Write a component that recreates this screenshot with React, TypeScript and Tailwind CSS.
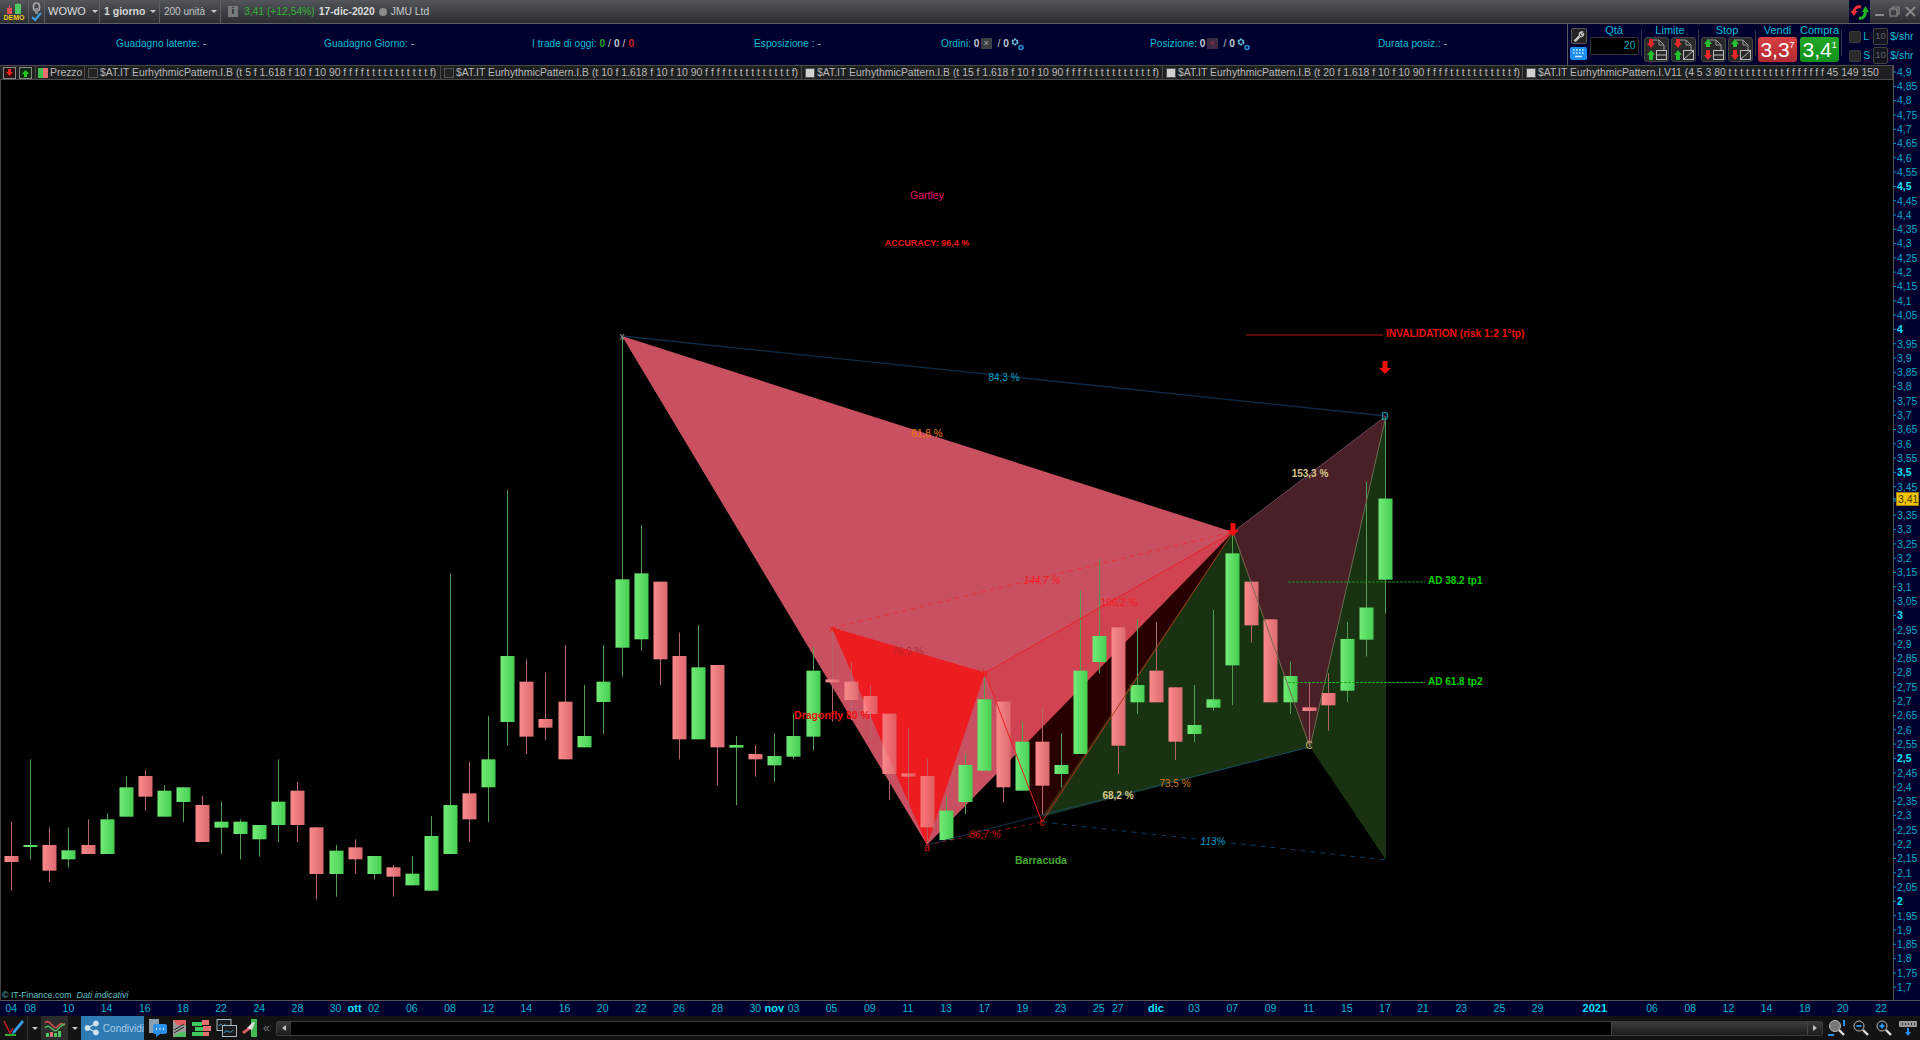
import React from "react";

type C = [number, number, number, number, "g" | "r"];
const z7 = (c: C): C => [480 + c[0] / 3, 480 + c[1] / 3, 480 + c[2] / 3, 480 + c[3] / 3, c[4]];
const z6 = (c: C): C => [520 + c[0] / 3, 520 + c[1] / 3, 520 + c[2] / 3, 520 + c[3] / 3, c[4]];
const z8 = (c: C): C => [320 + c[0] / 2.8, 320 + c[1] / 2.8, 320 + c[2] / 2.8, 320 + c[3] / 2.8, c[4]];

const candles: C[] = [
  ...([
    [1025, 1128, 1146, 1232, "r"], [838, 1095, 1097, 1138, "g"], [1042, 1095, 1172, 1206, "r"], [1042, 1111, 1138, 1162, "g"],
    [1018, 1095, 1122, 1122, "r"], [1000, 1018, 1122, 1122, "g"], [888, 922, 1010, 1010, "g"], [870, 888, 950, 992, "r"],
    [915, 932, 1010, 1010, "g"], [922, 922, 966, 1026, "g"], [948, 975, 1086, 1086, "r"], [965, 1025, 1043, 1122, "g"],
    [1018, 1025, 1062, 1138, "g"], [1035, 1035, 1078, 1130, "g"], [838, 965, 1035, 1086, "g"], [905, 932, 1035, 1086, "r"],
    [1042, 1042, 1182, 1258, "r"], [1095, 1112, 1182, 1250, "g"], [1078, 1102, 1138, 1182, "r"], [1128, 1128, 1182, 1198, "g"],
    [1155, 1162, 1190, 1250, "r"], [1128, 1181, 1216, 1216, "g"], [1008, 1068, 1232, 1232, "g"], [280, 975, 1122, 1122, "g"],
    [845, 940, 1018, 1086, "r"], [708, 838, 922, 1026, "g"], [30, 528, 726, 796, "g"], [538, 605, 770, 822, "r"],
    [578, 717, 743, 780, "r"], [495, 665, 838, 838, "r"], [615, 768, 802, 802, "g"], [495, 605, 666, 762, "g"],
    [-432, 298, 503, 590, "g"], [135, 280, 478, 512, "g"], [305, 305, 538, 615, "r"], [458, 528, 778, 838, "r"],
    [435, 562, 778, 778, "g"], [555, 555, 802, 916, "r"], [768, 795, 803, 976, "g"], [795, 822, 838, 890, "r"],
    [760, 828, 856, 906, "g"],
  ] as C[]).map(z7),
  ...([
    [580, 648, 710, 718, "g"], [380, 452, 650, 692, "g"], [325, 478, 487, 605, "r"], [425, 485, 540, 600, "r"],
    [495, 528, 582, 660, "r"], [580, 581, 762, 840, "r"], [622, 760, 770, 855, "r"], [717, 768, 922, 975, "r"],
    [828, 872, 960, 960, "g"], [700, 735, 846, 882, "g"], [470, 538, 752, 752, "g"], [545, 545, 802, 847, "r"],
    [605, 665, 812, 812, "g"], [562, 665, 797, 885, "r"], [640, 735, 762, 803, "g"], [212, 452, 702, 702, "g"],
    [118, 348, 426, 460, "g"], [322, 322, 677, 762, "r"], [297, 495, 547, 582, "g"], [305, 452, 547, 547, "r"],
    [502, 502, 665, 720, "r"], [495, 615, 642, 666, "g"], [270, 538, 563, 572, "g"], [40, 100, 436, 556, "g"],
    [185, 185, 316, 368, "r"], [298, 298, 547, 547, "r"], [425, 468, 547, 582, "g"], [485, 562, 573, 680, "r"],
    [460, 519, 556, 632, "r"],
  ] as C[]).map(z6),
  ...([
    [845, 893, 1038, 1070, "g"], [452, 805, 895, 942, "g"], [270, 500, 727, 822, "g"],
  ] as C[]).map(z8),
];

const cx = (i: number) => 11.2 + 19.08 * i;

const dates: [string, number, boolean?][] = [
  ["04", 0], ["08", 1], ["10", 3], ["14", 5], ["16", 7], ["18", 9], ["22", 11], ["24", 13], ["28", 15], ["30", 17], ["ott", 18, true],
  ["02", 19], ["06", 21], ["08", 23], ["12", 25], ["14", 27], ["16", 29], ["20", 31], ["22", 33], ["26", 35], ["28", 37], ["30", 39],
  ["nov", 40, true], ["03", 41], ["05", 43], ["09", 45], ["11", 47], ["13", 49], ["17", 51], ["19", 53], ["23", 55], ["25", 57], ["27", 58],
  ["dic", 60, true], ["03", 62], ["07", 64], ["09", 66], ["11", 68], ["15", 70], ["17", 72], ["21", 74], ["23", 76], ["25", 78], ["29", 80],
  ["2021", 83, true], ["06", 86], ["08", 88], ["12", 90], ["14", 92], ["18", 94], ["20", 96], ["22", 98],
];

const prices = Array.from({ length: 65 }, (_, i) => 490 - i * 5);

function Lbl({ x, y, c, children, italic, bold, size = 10, anchor = "middle" }: { x: number; y: number; c: string; children: React.ReactNode; italic?: boolean; bold?: boolean; size?: number; anchor?: "middle" | "start" }) {
  return (
    <text x={x} y={y + size * 0.36} fill={c} fontSize={size} textAnchor={anchor} fontStyle={italic ? "italic" : undefined} fontWeight={bold ? 700 : undefined}>
      {children}
    </text>
  );
}

function DownArrow({ x, y }: { x: number; y: number }) {
  return <path d={`M${x - 2.5} ${y - 7}h5v7h3.5l-6 6-6-6h3.5z`} fill="#f01010" />;
}

function Chart() {
  return (
    <svg viewBox="0 80 1893 920" className="block h-[920px] w-[1893px] shrink-0">
      <defs>
        <linearGradient id="gg" x1="0" x2="1" y1="0" y2="0">
          <stop offset="0" stopColor="#72ec78" />
          <stop offset="1" stopColor="#46cf52" />
        </linearGradient>
        <linearGradient id="rg" x1="0" x2="1" y1="0" y2="0">
          <stop offset="0" stopColor="#fa8a8c" />
          <stop offset="1" stopColor="#dc6a70" />
        </linearGradient>
      </defs>
      <line x1="0.5" y1="80" x2="0.5" y2="1000" stroke="#444" />
      <polygon points="1042,817 1233,532 1310,747" fill="#183212" />
      <polygon points="1310,747 1386,416 1386,860" fill="#183212" />
      <polygon points="622,336 1233,532 927,845" fill="#c95060" />
      <polygon points="1233,532 1386,416 1310,747" fill="#4a2028" />
      <polygon points="985,673 1233,532 1042,822" fill="#ff0000" fillOpacity="0.16" />
      <polygon points="832,628 927,845 985,673" fill="#ea2026" />

      {candles.map((c, i) => {
        const x = cx(i);
        const g = c[4] === "g";
        return (
          <g key={i}>
            <line x1={Math.round(x) + 0.5} x2={Math.round(x) + 0.5} y1={c[0]} y2={c[3]} stroke={g ? "#4f9f50" : "#b0666c"} />
            <rect x={Math.round(x) - 6.5} y={c[1]} width={14} height={Math.max(c[2] - c[1], 2)} fill={`url(#${g ? "gg" : "rg"})`} />
          </g>
        );
      })}
      <polygon points="832,628 927,845 985,673" fill="#ff0000" fillOpacity="0.12" />

      <g fill="none" strokeWidth="1">
        <line x1="622" y1="336" x2="1386" y2="416" stroke="#0e2c4a" strokeWidth="1.3" />
        <line x1="927" y1="845" x2="1042" y2="815" stroke="#143450" />
        <line x1="1042" y1="815" x2="1310" y2="747" stroke="#1a4860" />
        <line x1="1042" y1="822" x2="1386" y2="860" stroke="#123a5c" strokeDasharray="5 5" />
        <line x1="927" y1="845" x2="1042" y2="822" stroke="#801010" strokeDasharray="4 4" />
        <line x1="832" y1="628" x2="1233" y2="532" stroke="#f03038" strokeDasharray="5 4" />
        <line x1="985" y1="673" x2="1233" y2="532" stroke="#f02028" />
        <line x1="832" y1="628" x2="985" y2="673" stroke="#f01c20" />
        <line x1="985" y1="673" x2="1042" y2="822" stroke="#f01c20" />
        <line x1="1042" y1="822" x2="1233" y2="532" stroke="#a03c1c" />
        <line x1="1233" y1="532" x2="1310" y2="747" stroke="#7a6a50" />
        <line x1="1310" y1="747" x2="1386" y2="416" stroke="#6a7050" />
        <line x1="1233" y1="532" x2="1386" y2="416" stroke="#6a4a60" />
        <line x1="1246" y1="335" x2="1383" y2="335" stroke="#c01010" />
        <line x1="1288" y1="582" x2="1425" y2="582" stroke="#1c8c1c" strokeDasharray="3 1" />
        <line x1="1288" y1="682.5" x2="1425" y2="682.5" stroke="#12b012" strokeDasharray="3 1" />
      </g>

      <DownArrow x={1385} y={368} />
      <DownArrow x={1233} y={530} />

      <Lbl x={927} y={195} c="#e01068" size={10.5}>Gartley</Lbl>
      <Lbl x={927} y={243} c="#f01818" size={9} bold>ACCURACY: 96,4 %</Lbl>
      <Lbl x={1004} y={377} c="#00a0c4" size={10}>84,3 %</Lbl>
      <Lbl x={927} y={433} c="#f07808" size={10}>61,8 %</Lbl>
      <Lbl x={1042} y={580} c="#f81820" size={10} italic>144,7 %</Lbl>
      <Lbl x={1119} y={602} c="#f81820" size={10}>196,2 %</Lbl>
      <Lbl x={908} y={651} c="#b82830" size={10}>76,9 %</Lbl>
      <Lbl x={832} y={715} c="#f01010" size={10.5} bold>Dragonfly 80 %</Lbl>
      <Lbl x={985} y={834} c="#c81010" size={10} italic>86,7 %</Lbl>
      <Lbl x={1118} y={795} c="#d8c888" size={10} bold>68,2 %</Lbl>
      <Lbl x={1175} y={783} c="#d07810" size={10}>73,5 %</Lbl>
      <Lbl x={1213} y={841} c="#0098bc" size={10} italic>113%</Lbl>
      <Lbl x={1041} y={860} c="#42a82e" size={10.5} bold>Barracuda</Lbl>
      <Lbl x={1310} y={473} c="#d8c888" size={10} bold>153,3 %</Lbl>
      <Lbl x={1386} y={333} c="#f01010" size={10.2} bold anchor="start">INVALIDATION (risk 1:2 1°tp)</Lbl>
      <Lbl x={1428} y={580} c="#00d000" size={10} bold anchor="start">AD 38.2 tp1</Lbl>
      <Lbl x={1428} y={681} c="#00d000" size={10} bold anchor="start">AD 61.8 tp2</Lbl>

      <Lbl x={622} y={336} c="#9a9a9a" size={10}>x</Lbl>
      <Lbl x={1385} y={416} c="#00a8c8" size={10}>D</Lbl>
      <Lbl x={1309} y={745} c="#d0b060" size={10}>C</Lbl>
      <Lbl x={832} y={628} c="#f01818" size={10}>x</Lbl>
      <Lbl x={985} y={673} c="#f01818" size={10}>b</Lbl>
      <Lbl x={927} y={847} c="#e01818" size={10}>a</Lbl>
      <Lbl x={1042} y={822} c="#e01818" size={10}>c</Lbl>

      <text x={2} y={998} fontSize={8.8} fill="#5fc4c8">
        © IT-Finance.com
        <tspan dx={5} fontStyle="italic">Dati indicativi</tspan>
      </text>
    </svg>
  );
}

function PriceAxis() {
  return (
    <svg viewBox="1893 65 27 935" className="block h-[935px] w-[27px] shrink-0 bg-[#00002e]">
      <line x1="1893.5" y1="65" x2="1893.5" y2="1000" stroke="#555" />
      {prices.map((p) => {
        const y = 72 + (490 - p) * 2.86;
        const bold = p % 50 === 0;
        const s = (p / 100).toString().replace(".", ",");
        return (
          <g key={p}>
            <line x1="1893" x2="1896" y1={y} y2={y} stroke="#0090b0" />
            {p !== 340 && (
              <text x={1897} y={y + 3.8} fontSize={10.5} fill={bold ? "#00e0f8" : "#00a8c8"} fontWeight={bold ? 700 : 400}>
                {s}
              </text>
            )}
          </g>
        );
      })}
      <line x1="1890" x2="1897" y1="499" y2="499" stroke="#00c0e0" />
      <rect x="1896.5" y="492.5" width="22" height="13" fill="#f2c400" stroke="#a08000" />
      <text x={1898} y={503} fontSize={10.5} fill="#4a3a00">3,41</text>
    </svg>
  );
}

function DateAxis() {
  return (
    <svg viewBox="0 1000 1920 16" className="block h-4 w-[1920px] shrink-0 bg-[#00002e]">
      <line x1="0" x2="1920" y1="1000.5" y2="1000.5" stroke="#555" />
      {dates.map(([t, i, b], k) => (
        <text key={k} x={cx(i)} y={1012} textAnchor="middle" fontSize={b ? 11 : 10.5} fontWeight={b ? 700 : 400} fill={b ? "#00e0f8" : "#00b4d0"}>
          {t}
        </text>
      ))}
    </svg>
  );
}

function Caret() {
  return <span className="h-0 w-0 shrink-0 border-x-[3px] border-t-[3px] border-x-transparent border-t-[#c8c8c8]" />;
}

function Seg({ w, children }: { w: string; children: React.ReactNode }) {
  return <div className={`flex h-full items-center whitespace-nowrap border-r border-[#5a5f64] ${w}`}>{children}</div>;
}

function TopBar() {
  return (
    <div className="flex h-6 shrink-0 items-stretch border-b border-[#5c6166] bg-gradient-to-b from-[#52565b] to-[#2b2e31] text-[11px]">
      <Seg w="w-[29px] justify-center">
        <div className="flex flex-col items-center leading-none">
          <svg width="20" height="11" viewBox="0 0 20 11">
            <rect x="3" y="5" width="5" height="6" fill="#e05050" />
            <rect x="5" y="2" width="1" height="3" fill="#e05050" />
            <rect x="11" y="1" width="6" height="10" fill="#50c860" />
            <rect x="13.5" y="0" width="1" height="2" fill="#50c860" />
          </svg>
          <span className="text-[7px] font-bold text-[#f0c820]">DEMO</span>
        </div>
      </Seg>
      <Seg w="w-4 justify-center">
        <svg width="13" height="20" viewBox="0 0 13 20" fill="none">
          <rect x="3.5" y="1" width="6" height="8" rx="3" stroke="#aaa" strokeWidth="1.6" />
          <rect x="5" y="6" width="3" height="6" fill="#888" />
          <path d="M2 15l3 3 6-7" stroke="#3aa0e8" strokeWidth="2" />
        </svg>
      </Seg>
      <Seg w="w-[55px] gap-[6px] pl-[3px]">
        <span className="text-[#dcdcdc]">WOWO</span>
        <Caret />
      </Seg>
      <Seg w="w-[60px] gap-[5px] pl-[4px]">
        <span className="text-[10.5px] font-bold text-[#d8d8d8]">1 giorno</span>
        <Caret />
      </Seg>
      <Seg w="w-[61px] gap-[6px] pl-[4px]">
        <span className="text-[10px] text-[#c4c4c4]">200 unità</span>
        <Caret />
      </Seg>
      <div className="flex items-center pl-[7px] text-[10.3px]">
        <span className="mr-[6px] flex h-[11px] w-[10px] items-center justify-center bg-[#77797c] text-[9px] font-bold text-[#222]">i</span>
        <span className="text-[#32b432]">3,41 (+12,54%)</span>
        <span className="ml-[4px] font-bold text-[#dcdcdc]">17-dic-2020</span>
        <span className="mx-[4px] h-[8px] w-[8px] rounded-full bg-[#8c8c8c]" />
        <span className="text-[#c8c8c8]">JMU Ltd</span>
      </div>
      <div className="ml-auto flex items-stretch">
        <div className="flex w-[21px] items-center justify-center bg-[#00002e]">
          <svg width="18" height="18" viewBox="0 0 18 18" fill="none" strokeWidth="3">
            <path d="M10 4C6 3 3.500 5 3 9" stroke="#f03030" />
            <path d="M-.5 8l3.500 5 3.500-5z" fill="#f03030" />
            <path d="M8 15c4 1 6-2 6.500-6" stroke="#20b820" />
            <path d="M11 9l3.500-6 3.500 6z" fill="#20b820" />
          </svg>
        </div>
        <div className="flex w-[50px] items-center justify-around px-[2px]">
          <span className="mt-[6px] h-[2px] w-[9px] bg-[#8a8a8a]" />
          <svg width="11" height="11" viewBox="0 0 11 11" fill="none" stroke="#8a8a8a" strokeWidth="1.2">
            <rect x="1" y="3" width="7" height="7" />
            <path d="M3.5 3V1h6.5v7H8" />
          </svg>
          <svg width="11" height="11" viewBox="0 0 11 11" stroke="#8a8a8a" strokeWidth="2">
            <path d="M1 1l9 9M10 1l-9 9" />
          </svg>
        </div>
      </div>
    </div>
  );
}

function Gears() {
  return (
    <svg width="14" height="14" viewBox="0 0 14 14" fill="none" className="ml-[1px]">
      <circle cx="5" cy="5" r="2.5" stroke="#70c8e8" strokeWidth="2" strokeDasharray="2 .6" />
      <circle cx="11" cy="10.500" r="2" stroke="#2090d0" strokeWidth="1.6" />
    </svg>
  );
}

function Metric({ w, children }: { w: string; children: React.ReactNode }) {
  return <div className={`flex items-center whitespace-pre pb-[2px] text-[10.2px] text-[#00bcd4] ${w}`}>{children}</div>;
}

function OrderIcon({ up, slash }: { up?: boolean; slash?: boolean }) {
  const top = up ? "#22c030" : "#e82828";
  const bot = up ? "#e82828" : "#22c030";
  return (
    <div className="flex h-[25px] w-[25px] items-center justify-center rounded-[3px] border border-[#444] bg-[#2a2a2a]">
      <svg width="23" height="23" viewBox="0 0 23 23" fill="none">
        <path d="M5 2h9l5 5v5" stroke="#999" strokeWidth="1" />
        <path d="M14 2v5h5" stroke="#999" />
        <rect x="11.500" y="12.500" width="10" height="9" stroke="#bbb" />
        {slash ? <path d="M12 21l9-8" stroke="#bbb" /> : <path d="M11.500 17h10" stroke="#bbb" />}
        <path d={up ? "M4 9V6H2l4-5 4 5H8v3z" : "M4 1v4H2l4 5 4-5H8V1z"} fill={top} />
        <path d={up ? "M4 12v5H2l4 5 4-5H8v-5z" : "M4 22v-5H2l4-5 4 5H8v5z"} fill={bot} />
      </svg>
    </div>
  );
}

function Head({ children }: { children: React.ReactNode }) {
  return <div className="w-full text-center text-[11px] leading-[12px] text-[#00bcd4]">{children}</div>;
}

function Div() {
  return <div className="mt-[6px] h-[26px] w-px bg-[#333a44]" />;
}

function TradePanel() {
  return (
    <div className="flex h-full w-[353px] items-start gap-[2px] border-l border-[#555] pl-[2px]">
      <div className="mt-[4px] flex w-[17px] flex-col items-center gap-[3px]">
        <div className="flex h-[16px] w-[16px] items-center justify-center rounded-[2px] border border-[#555] bg-[#222]">
          <svg width="12" height="12" viewBox="0 0 12 12" fill="none" stroke="#c8c8c8" strokeWidth="1.2">
            <path d="M1.500 10.500l5-5a2.600 2.600 0 0 1 3-3.600L8 3.500 9 5l1.600-1.400a2.600 2.600 0 0 1-3.400 3l-4.600 4.600z" />
          </svg>
        </div>
        <svg width="17" height="14" viewBox="0 0 17 14">
          <rect width="17" height="13" rx="2" fill="#1d8ff0" />
          <path d="M3 3h1.500M6 3h1.500M9 3h1.500M12 3h1.500M3 6h1.500M6 6h1.500M9 6h1.500M12 6h1.500M5 9.500h7" stroke="#d0ecff" strokeWidth="1.4" />
        </svg>
      </div>
      <div className="flex w-[50px] flex-col items-center">
        <Head>Qtà</Head>
        <div className="mt-[1px] flex h-[18px] w-[49px] items-center justify-end rounded-[2px] border border-[#333] bg-black pr-[2px] text-[10.5px] text-[#00a8bc]">20</div>
      </div>
      <Div />
      <div className="flex flex-col items-center">
        <Head>Limite</Head>
        <div className="mt-[1px] flex gap-[2px]">
          <OrderIcon />
          <OrderIcon slash />
        </div>
      </div>
      <Div />
      <div className="flex flex-col items-center">
        <Head>Stop</Head>
        <div className="mt-[1px] flex gap-[2px]">
          <OrderIcon up />
          <OrderIcon up slash />
        </div>
      </div>
      <Div />
      <div className="flex gap-[3px]">
        <div className="flex flex-col items-center">
          <Head>Vendi</Head>
          <div className="mt-[1px] flex h-[25px] w-[39px] items-start justify-center rounded-[3px] bg-gradient-to-b from-[#d84044] to-[#b02a30] pt-[1px] text-[21px] leading-[23px] text-white">
            3,3<span className="mt-[2px] text-[9px] leading-[10px]">7</span>
          </div>
        </div>
        <div className="flex flex-col items-center">
          <Head>Compra</Head>
          <div className="mt-[1px] flex h-[25px] w-[39px] items-start justify-center rounded-[3px] bg-gradient-to-b from-[#22a828] to-[#10901a] pt-[1px] text-[21px] leading-[23px] text-white">
            3,4<span className="mt-[2px] text-[9px] leading-[10px]">1</span>
          </div>
        </div>
      </div>
      <Div />
      <div className="ml-[5px] mt-[5px] flex flex-col gap-[4px]">
        {["L", "S"].map((k) => (
          <div key={k} className="flex h-[15px] items-center">
            <span className="h-[12px] w-[12px] rounded-[2px] border border-[#3a3a3a] bg-[#2a2a2a]" />
            <span className="ml-[2px] w-[10px] text-[10.5px] text-[#00bcd4]">{k}</span>
            <span className="flex h-[17px] w-[15px] items-center justify-center rounded-[2px] border border-[#444] bg-[#141420] text-[9.5px] text-[#666]">10</span>
            <span className="ml-[2px] text-[10.5px] text-[#00bcd4]">$/shr</span>
          </div>
        ))}
      </div>
    </div>
  );
}

const W = "text-[#c0c8d0]";

function MetricsBar() {
  return (
    <div className="flex h-[41px] shrink-0 bg-[#00002e]">
      <div className="flex w-[1567px] pl-[116px]">
        <Metric w="w-[208px]">Guadagno latente: <span className={W}>-</span></Metric>
        <Metric w="w-[208px]">Guadagno Giorno: <span className={W}>-</span></Metric>
        <Metric w="w-[222px]">
          I trade di oggi: <span className="font-bold text-[#20a020]">0</span>
          <span className={`mx-[3px] ${W}`}>/</span><span className={`font-bold ${W}`}>0</span>
          <span className={`mx-[3px] ${W}`}>/</span><span className="font-bold text-[#d02020]">0</span>
        </Metric>
        <Metric w="w-[187px]">Esposizione : <span className={W}>-</span></Metric>
        <Metric w="w-[209px]">
          Ordini: <span className={`font-bold ${W}`}>0</span>
          <span className="ml-[1px] flex h-[11px] w-[11px] items-center justify-center bg-[#3a3f44] text-[9px] leading-none text-[#aaa]">×</span>
          <span className={`ml-[6px] ${W}`}>/</span><span className={`ml-[3px] font-bold ${W}`}>0</span>
          <Gears />
        </Metric>
        <Metric w="w-[228px]">
          Posizione: <span className={`font-bold ${W}`}>0</span>
          <span className="ml-[1px] flex h-[11px] w-[11px] items-center justify-center bg-[#3a2a44] text-[9px] leading-none text-[#a03048]">×</span>
          <span className={`ml-[6px] ${W}`}>/</span><span className={`ml-[3px] font-bold ${W}`}>0</span>
          <Gears />
        </Metric>
        <Metric w="w-[120px]">Durata posiz.: <span className={W}>-</span></Metric>
      </div>
      <TradePanel />
    </div>
  );
}

function Indicator({ w, on, text }: { w: string; on?: boolean; text: string }) {
  return (
    <div className={`flex h-full shrink-0 items-center overflow-hidden border-r border-[#4a4a4a] pl-[3px] ${w}`}>
      <span className={`mr-[2px] h-[10px] w-[10px] shrink-0 border border-[#555] ${on ? "bg-[#cfcfcf]" : "bg-[#222]"}`} />
      <span className="whitespace-nowrap text-[10.4px] text-[#b8b8b8]">{text}</span>
    </div>
  );
}

function LegendBar() {
  return (
    <div className="flex h-[15px] w-[1893px] shrink-0 items-stretch border-y border-[#4a4a4a] bg-[#1e1f21]">
      <div className="flex w-[36px] items-center justify-around border-r border-[#4a4a4a] px-[1px]">
        <svg width="13" height="12" viewBox="0 0 13 12">
          <rect x=".5" y=".5" width="12" height="11" fill="#2a1010" stroke="#888" />
          <path d="M5 2h3v3h2l-3.500 4L3 5h2z" fill="#f02020" />
        </svg>
        <svg width="13" height="12" viewBox="0 0 13 12">
          <rect x=".5" y=".5" width="12" height="11" fill="#102a10" stroke="#888" />
          <path d="M5 10V7H3l3.500-4L10 7H8v3z" fill="#20d020" />
        </svg>
      </div>
      <div className="flex w-[49px] items-center border-r border-[#4a4a4a] pl-[2px]">
        <span className="h-[10px] w-[5px] bg-[#40c050]" />
        <span className="mr-[2px] h-[10px] w-[5px] bg-[#e87070]" />
        <span className="text-[10.4px] text-[#b8b8b8]">Prezzo</span>
      </div>
      <Indicator w="w-[356px]" text="$AT.IT EurhythmicPattern.I.B (t 5 f 1.618 f 10 f 10 90 f f f f t t t t t t t t t t t f)" />
      <Indicator w="w-[361px]" text="$AT.IT EurhythmicPattern.I.B (t 10 f 1.618 f 10 f 10 90 f f f f t t t t t t t t t t t f)" />
      <Indicator w="w-[361px]" on text="$AT.IT EurhythmicPattern.I.B (t 15 f 1.618 f 10 f 10 90 f f f f t t t t t t t t t t t f)" />
      <Indicator w="w-[360px]" on text="$AT.IT EurhythmicPattern.I.B (t 20 f 1.618 f 10 f 10 90 f f f f t t t t t t t t t t t f)" />
      <Indicator w="w-[370px]" on text="$AT.IT EurhythmicPattern.I.V11 (4 5 3 80 t t t t t t t t t t f f f f f f f 45 149 150" />
    </div>
  );
}

function BottomBar() {
  return (
    <div className="flex h-6 shrink-0 items-center bg-[#131313]">
      <div className="flex h-full w-[28px] items-center justify-center border-r border-[#333]">
        <svg width="22" height="20" viewBox="0 0 22 20" fill="none">
          <path d="M1 3l6 12 3-5" stroke="#d02020" strokeWidth="1.4" />
          <path d="M2 17h11" stroke="#30b030" strokeWidth="2" />
          <path d="M10 13l9-11 2 2-9 11-3 1z" fill="#3aa0e8" />
        </svg>
      </div>
      <div className="flex h-full w-[13px] items-center justify-center"><Caret /></div>
      <div className="flex h-full w-[27px] items-center justify-center bg-[#2c2c2c]">
        <svg width="22" height="20" viewBox="0 0 22 20" fill="none">
          <path d="M1 5c5-6 8 8 12 4s4-4 8-2" stroke="#e05050" strokeWidth="1.4" />
          <path d="M1 10c5-6 8 6 12 2s4-5 8-6" stroke="#50c060" strokeWidth="1.4" />
          <rect x="2" y="15" width="3" height="4" fill="#50c860" />
          <rect x="6" y="14" width="3" height="5" fill="#e87070" />
          <rect x="10" y="15" width="3" height="4" fill="#50c860" />
          <rect x="14" y="13" width="3" height="6" fill="#50c860" />
        </svg>
      </div>
      <div className="flex h-full w-[13px] items-center justify-center"><Caret /></div>
      <div className="flex h-full w-[63px] items-center bg-[#2e7ab2] pl-[3px]">
        <svg width="16" height="16" viewBox="0 0 16 16" fill="#cfe2ef" stroke="#cfe2ef">
          <circle cx="3.500" cy="8" r="2.500" />
          <circle cx="12" cy="3.500" r="2.500" />
          <circle cx="12" cy="12.500" r="2.500" />
          <path d="M3.500 8L12 3.500M3.500 8l8.500 4.500" fill="none" strokeWidth="1.300" />
        </svg>
        <span className="ml-[3px] text-[10px] text-[#a8cde4]">Condividi</span>
      </div>
      <div className="ml-[4px] flex items-center gap-[4px]">
        <svg width="19" height="20" viewBox="0 0 19 20">
          <rect x="1" y="1" width="10" height="14" fill="#8aa0b0" />
          <rect x="5" y="6" width="14" height="10" rx="2" fill="#2a90e8" />
          <path d="M8 16v3l4-3z" fill="#2a90e8" />
          <path d="M8 11h1M11.500 11h1M15 11h1" stroke="#fff" strokeWidth="1.400" />
        </svg>
        <svg width="17" height="19" viewBox="0 0 17 19">
          <rect x="2" y="1" width="13" height="17" fill="#9a9a9a" />
          <path d="M2 1h13v5H6z" fill="#e06060" />
          <path d="M2 18h13v-5H9z" fill="#50c060" />
          <path d="M3 11l10-6M3 14l10-6" stroke="#222" />
        </svg>
        <svg width="20" height="19" viewBox="0 0 20 19">
          <rect x="0" y="3" width="10" height="4" fill="#40c860" />
          <rect x="3" y="8" width="8" height="4" fill="#40c860" />
          <rect x="0" y="13" width="11" height="4" fill="#40c860" />
          <rect x="10" y="1" width="7" height="5" fill="#e87070" />
          <rect x="11" y="7" width="8" height="5" fill="#e87070" />
          <rect x="11" y="13" width="6" height="4" fill="#e87070" />
        </svg>
        <svg width="21" height="20" viewBox="0 0 21 20" fill="#1a1a1a" stroke="#a8b8c4">
          <rect x="1" y="1.500" width="14" height="11" />
          <path d="M3 8c2-5 4 3 6-2" stroke="#3aa0e8" fill="none" />
          <rect x="6.500" y="7.500" width="14" height="11" />
          <path d="M8 15c3-6 5 3 9-3" stroke="#3aa0e8" fill="none" />
        </svg>
        <svg width="18" height="20" viewBox="0 0 18 20">
          <rect x="10" y="1" width="6" height="18" fill="#40b850" />
          <path d="M1 14l8-6 2 2-8 6z" fill="#e06060" />
          <path d="M6 10l6-6 2 1-3 7z" fill="#ddd" />
        </svg>
      </div>
      <span className="ml-[4px] w-[11px] text-[12px] leading-none text-[#777]">«</span>
      <div className="ml-[2px] flex h-[15px] flex-1 items-stretch overflow-hidden rounded-[2px] border border-[#3c3c3c] bg-black">
        <div className="flex w-[14px] items-center justify-center bg-gradient-to-b from-[#3a3a3a] to-[#1c1c1c]">
          <span className="h-0 w-0 border-y-[3px] border-r-[4px] border-y-transparent border-r-[#c0c0c0]" />
        </div>
        <div className="flex-1" />
        <div className="w-[197px] border-x border-[#444] bg-gradient-to-b from-[#3c3c3c] to-[#1c1c1c]" />
        <div className="flex w-[14px] items-center justify-center bg-gradient-to-b from-[#3a3a3a] to-[#1c1c1c]">
          <span className="h-0 w-0 border-y-[3px] border-l-[4px] border-y-transparent border-l-[#c0c0c0]" />
        </div>
      </div>
      <div className="ml-[4px] flex w-[93px] items-center justify-between pr-[2px]">
        <svg width="20" height="20" viewBox="0 0 20 20" fill="none">
          <circle cx="8" cy="8" r="5.500" fill="#777" stroke="#bbb" />
          <path d="M12 12l5 5" stroke="#ddd" strokeWidth="2.400" />
          <path d="M17 2v6M1 17h6" stroke="#2a90e8" strokeWidth="2" />
        </svg>
        <svg width="18" height="18" viewBox="0 0 18 18" fill="none">
          <circle cx="7" cy="7" r="5" fill="#111" stroke="#bbb" />
          <path d="M4.500 7h5" stroke="#2a90e8" strokeWidth="2" />
          <path d="M11 11l5 5" stroke="#ddd" strokeWidth="2.400" />
        </svg>
        <svg width="18" height="18" viewBox="0 0 18 18" fill="none">
          <circle cx="7" cy="7" r="5" fill="#111" stroke="#bbb" />
          <path d="M4.500 7h5M7 4.500v5" stroke="#2a90e8" strokeWidth="2" />
          <path d="M11 11l5 5" stroke="#ddd" strokeWidth="2.400" />
        </svg>
        <svg width="20" height="18" viewBox="0 0 20 18">
          <rect x="1" y="2" width="18" height="6" rx="1" fill="#999" />
          <path d="M4 5h1M7 5h1M10 5h1M13 5h1M16 5h1" stroke="#111" strokeWidth="1.400" />
          <path d="M9 9h2v4h2l-3 4-3-4h2z" fill="#2a90e8" />
        </svg>
      </div>
    </div>
  );
}

export default function App() {
  return (
    <div className="flex h-[1040px] w-[1920px] flex-col overflow-hidden bg-black [font-family:'Liberation_Sans',Arial,sans-serif]">
      <TopBar />
      <MetricsBar />
      <div className="flex h-[935px] shrink-0">
        <div className="flex w-[1893px] shrink-0 flex-col">
          <LegendBar />
          <Chart />
        </div>
        <PriceAxis />
      </div>
      <DateAxis />
      <BottomBar />
    </div>
  );
}
